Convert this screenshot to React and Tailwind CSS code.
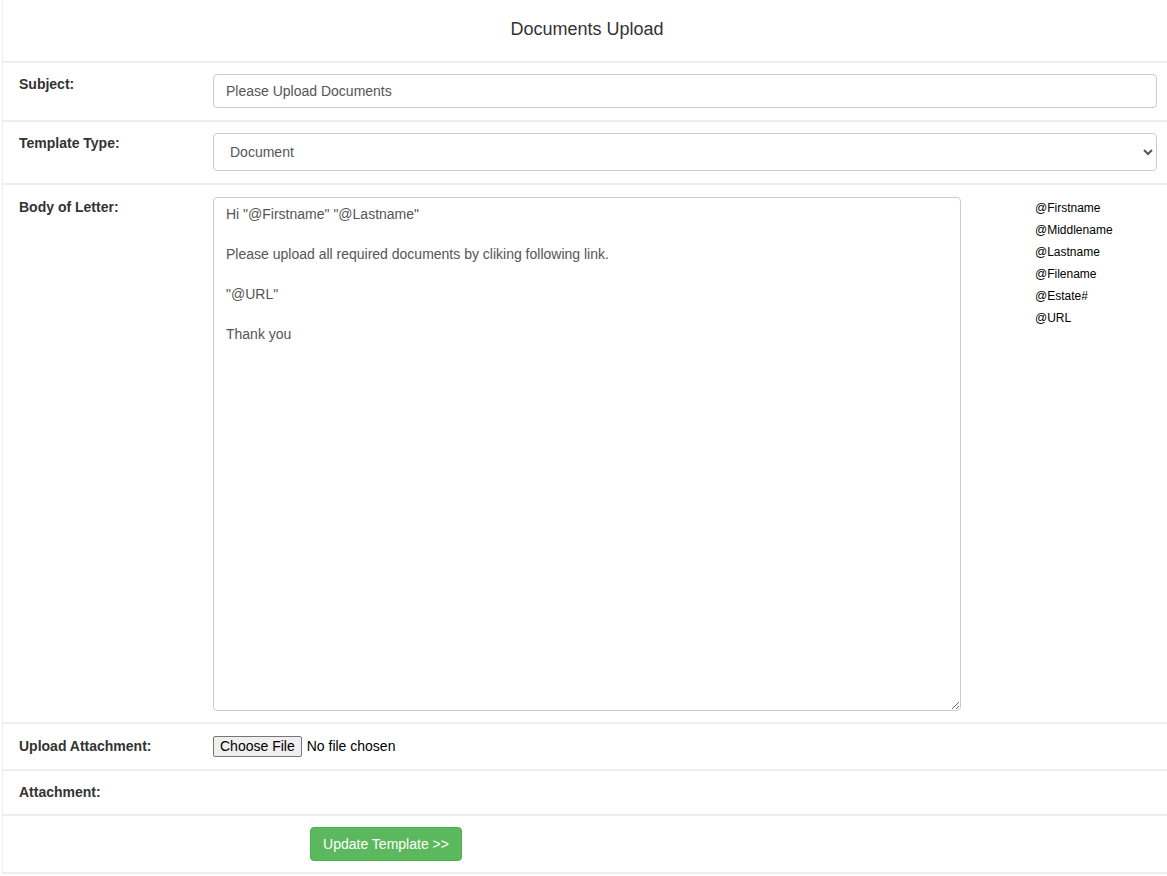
import React from 'react';

const variables = ['@Firstname', '@Middlename', '@Lastname', '@Filename', '@Estate#', '@URL'];

const bodyText = `Hi "@Firstname" "@Lastname"

Please upload all required documents by cliking following link.

"@URL"

Thank you`;

const Row = ({ label, className = '', children }) => (
    <div className={`flex border-b-2 border-[#eeeeee] ${className}`}>
        <div className="w-[210px] shrink-0 pl-4 pt-[5px] text-[14px] font-bold leading-[18px] text-[#333]">
            {label}
        </div>
        <div className="flex-1 min-w-0">{children}</div>
    </div>
);

const App = () => {
    return (
        <div className="min-h-[876px] bg-white pl-[2px] font-['Liberation_Sans',Arial,sans-serif] text-[#333]">
            <div className="w-[1165px] border-l border-b-2 border-[#eeeeee]">
                <div className="h-[63px] pl-[4px] pb-[2px] flex items-center justify-center border-b-2 border-[#eeeeee] text-[18px] text-[#333]">
                    Documents Upload
                </div>

                <Row label="Subject:" className="pt-[7px] pb-[12px]">
                    <div className="pt-[4px] pr-[10px]">
                        <input
                            type="text"
                            defaultValue="Please Upload Documents"
                            className="w-full h-[34px] px-3 border border-[#cccccc] rounded-[4px] text-[14px] text-[#555] outline-none"
                        />
                    </div>
                </Row>

                <Row label="Template Type:" className="pt-[7px] pb-[12px]">
                    <div className="pt-[4px] pr-[10px]">
                        <select
                            defaultValue="Document"
                            className="w-full h-[38px] pl-3 pr-2 border border-[#cccccc] rounded-[4px] bg-white text-[14px] text-[#555] outline-none"
                        >
                            <option>Document</option>
                        </select>
                    </div>
                </Row>

                <Row label="Body of Letter:" className="pt-[8px] pb-[11px]">
                    <div className="flex pt-[4px]">
                        <textarea
                            defaultValue={bodyText}
                            className="w-[748px] h-[514px] px-3 pt-[6px] border border-[#cccccc] rounded-[4px] text-[14px] leading-[20px] text-[#555] outline-none"
                        />
                        <ul className="ml-[74px] text-[12px] leading-[22px] text-black">
                            {variables.map((v) => (
                                <li key={v}>{v}</li>
                            ))}
                        </ul>
                    </div>
                </Row>

                <Row label="Upload Attachment:" className="pt-[8px] pb-[12px]">
                    <div className="flex items-center pt-[4px] text-[14px] text-black">
                        <span className="border border-[#767676] bg-[#efefef] rounded-[2px] px-[6px] h-[21px] leading-[19px]">
                            Choose File
                        </span>
                        <span className="ml-[5px]">No file chosen</span>
                    </div>
                </Row>

                <Row label="Attachment:" className="pt-[7px] pb-[13px]">
                    <div className="h-[18px]" />
                </Row>

                <div className="h-[56px] flex items-center">
                    <button className="ml-[307px] h-[34px] w-[152px] bg-[#5cb85c] border border-[#4cae4c] rounded-[4px] text-white text-[14px]">
                        Update Template &gt;&gt;
                    </button>
                </div>
            </div>
        </div>
    );
};

export default App;
